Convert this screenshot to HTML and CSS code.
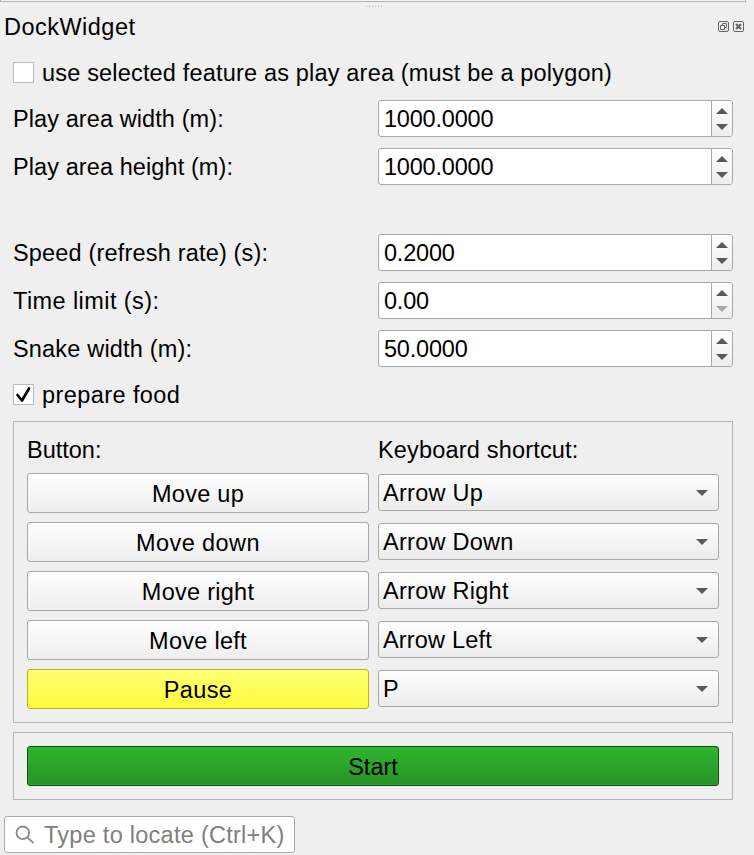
FILE: index.html
```html
<!DOCTYPE html>
<html lang="en">
<head>
<meta charset="utf-8">
<title>DockWidget</title>
<link rel="stylesheet" href="styles.css">
</head>
<body>
<svg width="0" height="0" class="defs">
  <symbol id="up" viewBox="0 0 12 6"><path d="M0 6L6 0L12 6Z"/></symbol>
  <symbol id="down" viewBox="0 0 12 6"><path d="M0 0L6 6L12 0Z"/></symbol>
</svg>
<div class="canvas-edge"></div>
<div class="grip"></div>
<header class="titlebar">
  <h1>DockWidget</h1>
  <div class="controls">
    <svg viewBox="0 0 11 11"><rect x=".5" y=".5" width="10" height="10" rx="1.5"/><path d="M4.5 4V2.5H8.5V6.5H7M2.5 4.5H6.5V8.5H2.5Z"/></svg>
    <svg viewBox="0 0 11 11"><rect x=".5" y=".5" width="10" height="10" rx="1.5"/><path class="cross" d="M3 3L8 8M8 3L3 8"/></svg>
  </div>
</header>
<main>
  <label class="check"><span class="box"></span><span class="ls-s">use selected feature as play area (must be a polygon)</span></label>
  <section class="form">
    <div class="row"><span class="ls-xs">Play area width (m):</span><div class="spin"><span>1000.0000</span><div class="steps"><svg><use href="#up"/></svg><svg><use href="#down"/></svg></div></div></div>
    <div class="row"><span class="ls-xs">Play area height (m):</span><div class="spin"><span>1000.0000</span><div class="steps"><svg><use href="#up"/></svg><svg><use href="#down"/></svg></div></div></div>
    <div class="row spaced"><span class="ls-s">Speed (refresh rate) (s):</span><div class="spin"><span>0.2000</span><div class="steps"><svg><use href="#up"/></svg><svg><use href="#down"/></svg></div></div></div>
    <div class="row"><span class="ls-l">Time limit (s):</span><div class="spin"><span>0.00</span><div class="steps"><svg><use href="#up"/></svg><svg class="off"><use href="#down"/></svg></div></div></div>
    <div class="row"><span class="ls-s">Snake width (m):</span><div class="spin"><span>50.0000</span><div class="steps"><svg><use href="#up"/></svg><svg><use href="#down"/></svg></div></div></div>
  </section>
  <label class="check food"><span class="box"><svg viewBox="0 0 19 19"><path d="M3.5 10L8 15.5L15 3.5"/></svg></span><span class="ls-l">prepare food</span></label>
  <section class="group keys">
    <span class="head">Button:</span><span class="head ls-s">Keyboard shortcut:</span>
    <div class="btn ls-m">Move up</div><div class="combo ls-m"><span>Arrow Up</span><svg><use href="#down"/></svg></div>
    <div class="btn ls-l">Move down</div><div class="combo ls-m"><span>Arrow Down</span><svg><use href="#down"/></svg></div>
    <div class="btn ls-m">Move right</div><div class="combo ls-m"><span>Arrow Right</span><svg><use href="#down"/></svg></div>
    <div class="btn ls-m">Move left</div><div class="combo ls-s"><span>Arrow Left</span><svg><use href="#down"/></svg></div>
    <div class="btn pause ls-l">Pause</div><div class="combo"><span>P</span><svg><use href="#down"/></svg></div>
  </section>
  <section class="group run"><div class="btn start">Start</div></section>
</main>
<div class="locator ls-m"><svg viewBox="0 0 20 20"><circle cx="7.8" cy="7.8" r="6.3"/><path d="M12.4 12.4L18.5 18"/></svg><span>Type to locate (Ctrl+K)</span></div>
</body>
</html>
```

FILE: styles.css
```css
* { box-sizing: border-box; }
body {
  margin: 0;
  width: 754px;
  height: 855px;
  overflow: hidden;
  background: #efefef;
  color: #000;
  font: 23.5px/28px "Liberation Sans", Arial, sans-serif;
  white-space: nowrap;
}
.ls-xs { letter-spacing: .09px; }
.ls-s { letter-spacing: .18px; }
.ls-m { letter-spacing: .27px; }
.ls-l { letter-spacing: .42px; }
.defs { position: absolute; }
svg { display: block; flex: none; }
.canvas-edge {
  width: 746px;
  height: 2px;
  background: #f6f6f6;
  border: 1px solid #b0b0b0;
  border-top: 0;
}
.grip {
  width: 17px;
  height: 1px;
  margin: 4px 0 0 366px;
  background: repeating-linear-gradient(90deg, #b4b4b4 0 1px, transparent 1px 3px);
}
.titlebar {
  display: flex;
  justify-content: space-between;
  height: 55px;
  padding: 6px 10px 0 4px;
}
h1 { margin: 0; font: inherit; letter-spacing: .48px; }
.controls { display: flex; gap: 4px; padding-top: 8px; }
.controls svg { width: 11px; height: 11px; fill: none; stroke: #666660; }
.controls .cross { stroke-width: 2.2; }
main { padding: 0 21px 0 13px; }
.check { display: flex; align-items: center; gap: 8px; height: 21px; }
.box { width: 21px; height: 21px; border: 1px solid #bcbcbc; background: #fff; }
.box svg { width: 19px; height: 19px; fill: none; stroke: #000; stroke-width: 2.7; stroke-linecap: round; stroke-linejoin: round; }
.form { display: flex; flex-direction: column; gap: 11px; margin-top: 17px; }
.row { display: grid; grid-template-columns: 365px 355px; align-items: center; height: 37px; }
.spaced { margin-top: 38px; }
.spin {
  display: flex;
  justify-content: space-between;
  align-items: center;
  height: 37px;
  padding-left: 5px;
  border: 1px solid #a8a8a8;
  border-radius: 3px;
  background: #fff;
  letter-spacing: -.2px;
}
.steps {
  display: flex;
  flex-direction: column;
  align-items: center;
  gap: 10px;
  width: 21px;
  height: 35px;
  padding: 6.5px 1px 0 0;
  border-left: 1px solid #a8a8a8;
  border-radius: 0 2px 2px 0;
  background: linear-gradient(#fefefe, #eee);
}
.steps svg, .combo svg { width: 12px; height: 6px; fill: #5a5a5a; }
.steps .off { fill: #a8a8a8; }
.food { margin-top: 17px; }
.group { border: 1px solid #b5b5b5; padding: 0 13px; }
.keys {
  display: grid;
  grid-template-columns: 342px 341px;
  grid-template-rows: 40px;
  grid-auto-rows: 40px;
  column-gap: 9px;
  row-gap: 9px;
  align-items: center;
  height: 302px;
  margin-top: 16px;
  padding-top: 2px;
}
.head { padding-top: 12px; }
.btn {
  display: flex;
  justify-content: center;
  align-items: center;
  height: 40px;
  padding-top: 2px;
  border: 1px solid #a8a8a8;
  border-radius: 3px;
  background: linear-gradient(#fefefe, #eee);
}
.combo {
  display: flex;
  justify-content: space-between;
  align-items: center;
  height: 37px;
  margin-bottom: 1px;
  padding: 0 10px 0 4px;
  border: 1px solid #a8a8a8;
  border-radius: 3px;
  background: linear-gradient(#fefefe, #ececec);
}
.pause { border-color: #b8b80e; background: linear-gradient(#ffff73, #fdfb3e); }
.run { height: 68px; margin-top: 9px; padding-top: 13px; }
.start { border-color: #075007; background: linear-gradient(#2eb52e, #279327); box-shadow: inset 0 0 0 1px #45a94580; }
.locator {
  display: flex;
  align-items: center;
  gap: 9px;
  width: 291px;
  height: 37px;
  margin: 16px 0 0 4px;
  padding-left: 10px;
  border: 1px solid #aaa;
  border-radius: 3px;
  background: #fff;
  color: #808080;
}
.locator svg { width: 20px; height: 20px; fill: none; stroke: #8c8c8c; stroke-width: 1.8; }
```
